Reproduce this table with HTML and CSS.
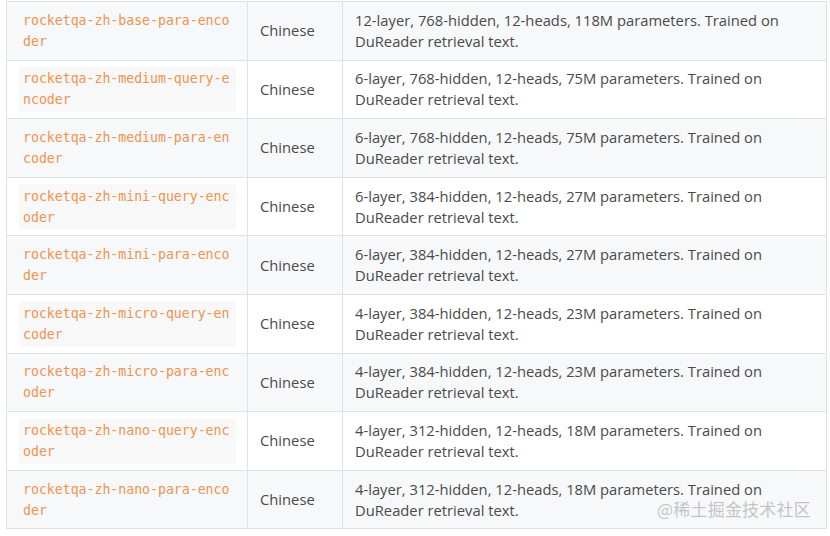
FILE: index.html
```html
<!DOCTYPE html>
<html>
<head>
<meta charset="utf-8">
<link rel="stylesheet" href="styles.css">
</head>
<body>
<div class="wrap">
<table class="models">
  <tr><td class="c-name"><code>rocketqa-zh-base-para-encoder</code></td><td class="c-lang">Chinese</td><td class="c-desc">12-layer, 768-hidden, 12-heads, 118M parameters. Trained on DuReader retrieval text.</td></tr>
  <tr><td class="c-name"><code>rocketqa-zh-medium-query-encoder</code></td><td class="c-lang">Chinese</td><td class="c-desc">6-layer, 768-hidden, 12-heads, 75M parameters. Trained on DuReader retrieval text.</td></tr>
  <tr><td class="c-name"><code>rocketqa-zh-medium-para-encoder</code></td><td class="c-lang">Chinese</td><td class="c-desc">6-layer, 768-hidden, 12-heads, 75M parameters. Trained on DuReader retrieval text.</td></tr>
  <tr><td class="c-name"><code>rocketqa-zh-mini-query-encoder</code></td><td class="c-lang">Chinese</td><td class="c-desc">6-layer, 384-hidden, 12-heads, 27M parameters. Trained on DuReader retrieval text.</td></tr>
  <tr><td class="c-name"><code>rocketqa-zh-mini-para-encoder</code></td><td class="c-lang">Chinese</td><td class="c-desc">6-layer, 384-hidden, 12-heads, 27M parameters. Trained on DuReader retrieval text.</td></tr>
  <tr><td class="c-name"><code>rocketqa-zh-micro-query-encoder</code></td><td class="c-lang">Chinese</td><td class="c-desc">4-layer, 384-hidden, 12-heads, 23M parameters. Trained on DuReader retrieval text.</td></tr>
  <tr><td class="c-name"><code>rocketqa-zh-micro-para-encoder</code></td><td class="c-lang">Chinese</td><td class="c-desc">4-layer, 384-hidden, 12-heads, 23M parameters. Trained on DuReader retrieval text.</td></tr>
  <tr><td class="c-name"><code>rocketqa-zh-nano-query-encoder</code></td><td class="c-lang">Chinese</td><td class="c-desc">4-layer, 312-hidden, 12-heads, 18M parameters. Trained on DuReader retrieval text.</td></tr>
  <tr><td class="c-name"><code>rocketqa-zh-nano-para-encoder</code></td><td class="c-lang">Chinese</td><td class="c-desc">4-layer, 312-hidden, 12-heads, 18M parameters. Trained on DuReader retrieval text.</td></tr>
</table>
<div class="watermark">@稀土掘金技术社区</div>
</div>
</body>
</html>
```
FILE: styles.css
```css
html, body {
  margin: 0;
  padding: 0;
  background: #ffffff;
}
.wrap {
  position: relative;
  width: 830px;
  height: 536px;
  padding: 1px 0 0 6px;
  box-sizing: border-box;
  overflow: hidden;
}
.models {
  border-collapse: collapse;
  table-layout: fixed;
  width: 821px;
  font-family: "Open Sans", "Noto Sans", sans-serif;
  font-size: 14.75px;
  color: #4a4a4a;
}
.models tr:nth-child(odd) {
  background: #f6f8fa;
}
.models td {
  border: 1px solid #dfe2e5;
  padding: 5.8px 12px;
  line-height: 21px;
  vertical-align: middle;
}
.c-name { width: 217px; padding-right: 11px !important; }
.c-lang { width: 70px; }
code {
  display: block;
  font-family: "DejaVu Sans Mono", "Liberation Mono", monospace;
  font-size: 13.2px;
  line-height: 21px;
  color: #ef9350;
  background: #f8f8f8;
  padding: 2px 4px;
  border-radius: 3px;
  word-break: break-all;
}
.models tr:nth-child(odd) code {
  background: transparent;
}
.watermark {
  position: absolute;
  left: 657px;
  top: 497px;
  font-family: "Noto Sans CJK SC", sans-serif;
  font-size: 17px;
  line-height: 24px;
  color: rgba(150, 150, 150, 0.55);
  letter-spacing: 0.2px;
}
```
